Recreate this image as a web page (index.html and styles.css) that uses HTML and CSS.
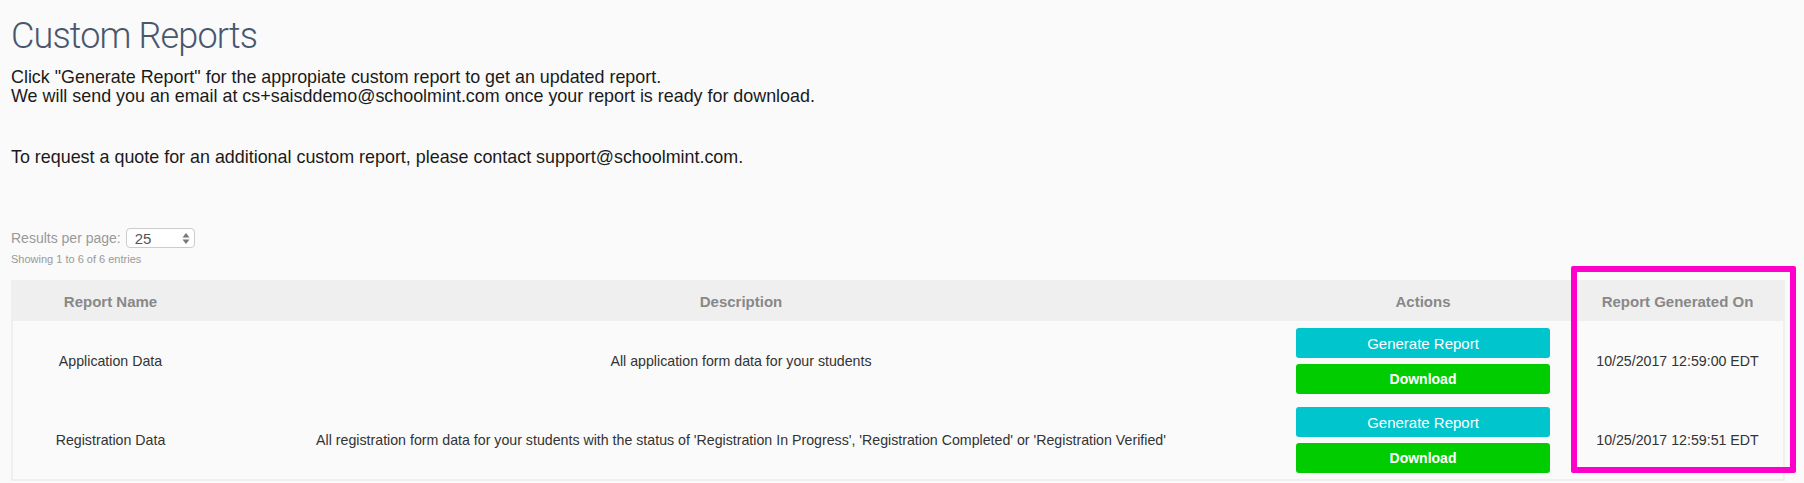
FILE: index.html
```html
<!DOCTYPE html>
<html lang="en">
<head>
    <meta charset="UTF-8">
    <meta name="viewport" content="width=device-width, initial-scale=1.0">
    <title>Custom Reports</title>
    <link rel="stylesheet" href="styles.css">
</head>
<body>
    <h1 class="page-title">Custom Reports</h1>
    <p class="intro">
        Click "Generate Report" for the appropiate custom report to get an updated report.<br>
        We will send you an email at cs+saisddemo@schoolmint.com once your report is ready for download.
    </p>
    <p class="intro quote">To request a quote for an additional custom report, please contact support@schoolmint.com.</p>

    <div class="per-page">
        <label>Results per page:</label>
        <div class="select-box">
            <span>25</span>
            <svg width="8" height="13" viewBox="0 0 8 13">
                <path d="M4 1 L7.5 5.5 L0.5 5.5 Z" fill="#777"/>
                <path d="M4 12 L7.5 7.5 L0.5 7.5 Z" fill="#777"/>
            </svg>
        </div>
    </div>
    <div class="showing">Showing 1 to 6 of 6 entries</div>

    <table class="reports">
        <colgroup>
            <col style="width: 196px">
            <col style="width: 1066px">
            <col style="width: 298px">
            <col style="width: 212px">
        </colgroup>
        <thead>
            <tr>
                <th>Report Name</th>
                <th>Description</th>
                <th>Actions</th>
                <th>Report Generated On</th>
            </tr>
        </thead>
        <tbody>
            <tr>
                <td>Application Data</td>
                <td>All application form data for your students</td>
                <td class="actions">
                    <button class="btn btn-generate">Generate Report</button>
                    <button class="btn btn-download">Download</button>
                </td>
                <td>10/25/2017 12:59:00 EDT</td>
            </tr>
            <tr>
                <td>Registration Data</td>
                <td>All registration form data for your students with the status of 'Registration In Progress', 'Registration Completed' or 'Registration Verified'</td>
                <td class="actions">
                    <button class="btn btn-generate">Generate Report</button>
                    <button class="btn btn-download">Download</button>
                </td>
                <td>10/25/2017 12:59:51 EDT</td>
            </tr>
        </tbody>
    </table>

    <div class="highlight"></div>
</body>
</html>
```

FILE: styles.css
```css
/* General */
body {
    margin: 0;
    padding: 0 11px;
    background-color: #fafafa;
    font-family: "Liberation Sans", Arial, sans-serif;
    color: #222;
    position: relative;
    overflow: hidden;
}

.page-title {
    margin: 16px 0 0;
    font-family: Roboto, "Liberation Sans", sans-serif;
    font-weight: 300;
    font-size: 36px;
    line-height: 40px;
    letter-spacing: -0.85px;
    color: #48576e;
}

.intro {
    margin: 12px 0 0;
    font-size: 17.9px;
    line-height: 19px;
    color: #1a1a1a;
}

.intro.quote {
    margin-top: 42px;
}

/* Results per page */
.per-page {
    display: flex;
    align-items: center;
    gap: 5px;
    margin-top: 61px;
    height: 20px;
    font-size: 14px;
    color: #999;
}

.select-box {
    box-sizing: border-box;
    width: 69px;
    height: 20px;
    display: flex;
    align-items: center;
    justify-content: space-between;
    padding: 0 4px 0 8px;
    background-color: #fff;
    border: 1px solid #ccc;
    border-radius: 4px;
    font-size: 15px;
    color: #555;
}

.showing {
    margin-top: 4px;
    font-size: 11px;
    line-height: 14px;
    color: #999;
}

/* Table */
.reports {
    margin-top: 14px;
    width: 1772px;
    table-layout: fixed;
    border-collapse: collapse;
    border: 2px solid #efefef;
}

.reports th {
    height: 39px;
    padding: 0;
    background-color: #efefef;
    font-size: 15px;
    font-weight: bold;
    color: #888;
    text-align: center;
    vertical-align: middle;
}

.reports td {
    height: 79px;
    padding: 0 8px;
    box-sizing: border-box;
    background-color: #fafafa;
    font-size: 14.2px;
    color: #333;
    text-align: center;
    vertical-align: middle;
}

.reports td.actions {
    padding: 7px 22px 6px;
}

/* Buttons */
.btn {
    display: block;
    width: 100%;
    height: 30px;
    border: none;
    border-radius: 3px;
    color: #fff;
    font-family: "Liberation Sans", Arial, sans-serif;
    cursor: pointer;
}

.btn + .btn {
    margin-top: 6px;
}

.btn-generate {
    background-color: #00c5cc;
    font-size: 15px;
}

.btn-download {
    background-color: #00cc00;
    font-size: 14px;
    font-weight: bold;
}

/* Annotation box */
.highlight {
    position: absolute;
    left: 1571px;
    top: 266px;
    width: 225px;
    height: 207px;
    box-sizing: border-box;
    border: 6px solid #ff00cc;
    border-radius: 2px;
}
```
